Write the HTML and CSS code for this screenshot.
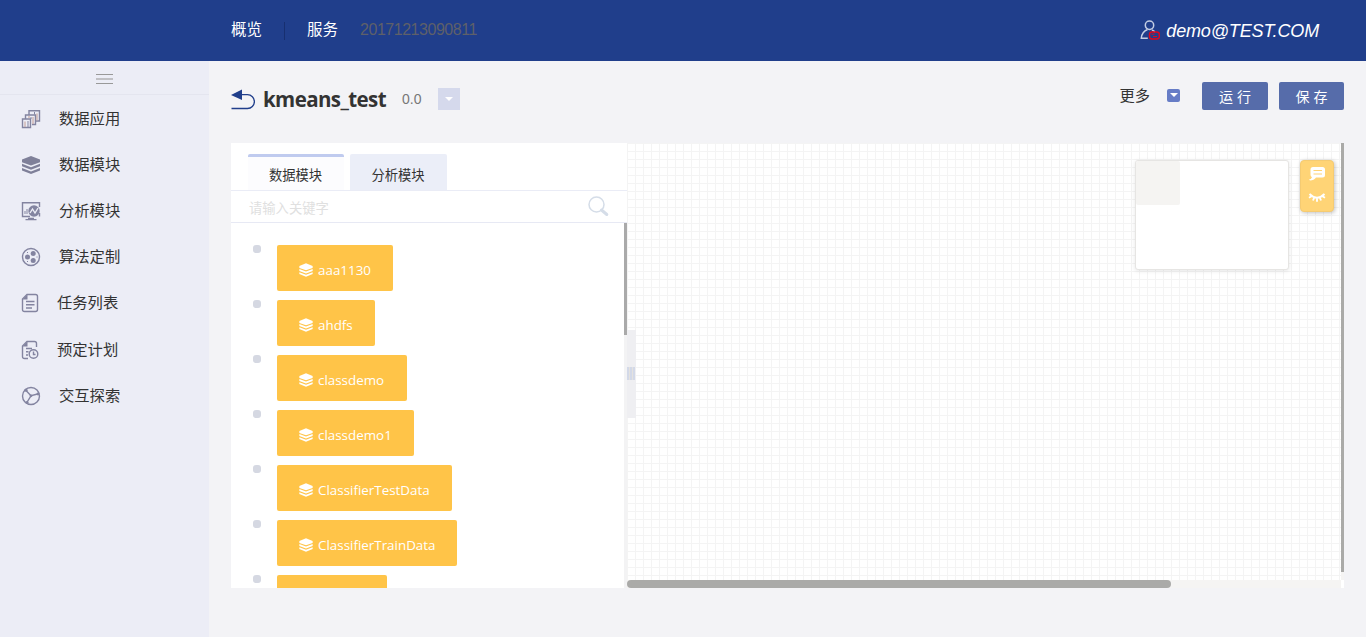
FILE: index.html
```
<!DOCTYPE html>
<html lang="zh-CN">
<head>
<meta charset="utf-8">
<title>kmeans_test</title>
<link rel="stylesheet" href="styles.css">
</head>
<body>
<svg class="defs" width="0" height="0">
  <symbol id="layers" viewBox="0 0 20 19"><path d="M10 0 19.500 3.800V6.500L10 10 0.500 6.500V3.800z"/><path d="M0.500 8.200 10 11.800 19.500 8.200V10.800L10 14.500 0.500 10.800z"/><path d="M0.500 12.700 10 16.300 19.500 12.700V15.300L10 19 0.500 15.300z"/></symbol>
</svg>
<header class="topbar">
  <nav class="topnav"><a>概览</a><i class="sep"></i><a>服务</a><span class="stamp">20171213090811</span></nav>
  <div class="user">
    <svg width="20" height="21" viewBox="0 0 20 21" fill="none"><circle cx="9.500" cy="5.200" r="4.200" stroke="#c3cde4" stroke-width="1.500"/><path d="M7.500 9.500C3.500 11 1.700 14 1.300 18.200h6.500M12 9.800l3 2" stroke="#c3cde4" stroke-width="1.500"/><rect x="9.500" y="12" width="9.800" height="7" rx="2.500" stroke="#e0061c" stroke-width="1.400"/><path d="M11.500 14.200h3M13 16.500h4" stroke="#e0061c"/></svg>
    <em>demo@TEST.COM</em>
  </div>
</header>
<div class="body">
  <aside class="sidebar">
    <div class="toggle"><span class="burger"></span></div>
    <ul class="menu">
      <li><svg viewBox="0 0 20 20"><path d="M8 6V1.800h10.500V12H15M4.500 10V6h10v9.500H11M1.500 10h8v8.500h-8z"/><path class="warm" d="M4 12.500v5.500M12 8v7M16 4.500v7M8 7v2"/><path class="thin" d="M7 12v6M10 8v2M13.500 3v2.500"/></svg><span>数据应用</span></li>
      <li><svg class="solid"><use href="#layers"/></svg><span>数据模块</span></li>
      <li><svg viewBox="0 0 20 20"><path d="M9 15.500H1.500V1.700h17V6M18.500 12v3.500"/><path class="thin" d="M4 10v3M6 8v5"/><circle class="fill" cx="13" cy="10" r="5.700"/><path class="light" d="M9 12l2.500-4 2.500 4 3-5"/><path d="M4.500 18.600h11M7 17.500h6"/></svg><span>分析模块</span></li>
      <li><svg viewBox="0 0 20 20"><circle cx="10" cy="10" r="8.500"/><circle class="fill" cx="6.500" cy="10" r="2.500"/><circle class="fill" cx="12.200" cy="6.500" r="2.500"/><circle class="fill" cx="12.200" cy="13.500" r="2.500"/><path class="thin" d="M6 5.500h1M6 14.500h1M15.500 10h1"/></svg><span>算法定制</span></li>
      <li class="narrow"><svg viewBox="0 0 20 20"><path d="M6 1.500h8.500q2 0 2 2v13q0 2-2 2H3.500q-2 0-2-2V6z"/><path class="fill" d="M1.500 6.500H6.500V1.500z"/><path d="M5 8.500h8.500M5 11.800h8.500M5 15h6"/></svg><span>任务列表</span></li>
      <li class="narrow"><svg viewBox="0 0 20 20"><path d="M7 18.500H3.500q-2 0-2-2V6L6 1.500h7.500q2 0 2 2V7M5 8.500h6M5 11.800h2.500M5 15h2"/><path class="fill" d="M1.500 6.500H6.500V1.500z"/><circle cx="12.500" cy="14" r="4.300"/><path d="M12.500 11.500V14.500h2"/></svg><span>预定计划</span></li>
      <li><svg viewBox="0 0 20 20"><circle cx="10" cy="10" r="8.500"/><path d="M4 3.500 10 9.800l8.500-2.300M10 9.800 5.500 17"/><circle class="fill" cx="5" cy="4.200" r="1.600"/><circle class="fill" cx="17" cy="8" r="1.400"/><circle class="fill" cx="10" cy="9.800" r="1.400"/><circle class="fill" cx="6" cy="16.500" r="1.600"/></svg><span>交互探索</span></li>
    </ul>
  </aside>
  <main class="main">
    <div class="titlebar">
      <svg class="back" width="24" height="21" viewBox="0 0 24 21"><path d="M0 6 11 0.500V11z" fill="#203e8b"/><path d="M10 5.700h6.500a6.800 6.800 0 0 1 0 13.800H0.500" fill="none" stroke="#203e8b" stroke-width="1.300"/></svg>
      <h1>kmeans_test</h1><span class="ver">0.0</span>
      <span class="drop"></span>
      <div class="actions"><span class="more">更多</span><span class="moredrop"></span><button>运 行</button><button class="save">保 存</button></div>
    </div>
    <div class="workspace">
      <section class="panel">
        <div class="tabs"><div class="tab active">数据模块</div><div class="tab">分析模块</div></div>
        <div class="search"><span>请输入关键字</span><svg width="21" height="22" viewBox="0 0 21 22" fill="none" stroke="#d5dde8"><circle cx="8.500" cy="8.500" r="7.500" stroke-width="1.500"/><path d="M13.500 14l5.300 4.500" stroke-width="3" stroke-linecap="round"/></svg></div>
        <div class="listwrap">
          <ul class="list">
            <li><i></i><div class="card w1"><svg><use href="#layers"/></svg>aaa1130</div></li>
            <li><i></i><div class="card w2"><svg><use href="#layers"/></svg>ahdfs</div></li>
            <li><i></i><div class="card w3"><svg><use href="#layers"/></svg>classdemo</div></li>
            <li><i></i><div class="card w4"><svg><use href="#layers"/></svg>classdemo1</div></li>
            <li><i></i><div class="card w5"><svg><use href="#layers"/></svg>ClassifierTestData</div></li>
            <li><i></i><div class="card w6"><svg><use href="#layers"/></svg>ClassifierTrainData</div></li>
            <li><i></i><div class="card w7"></div></li>
          </ul>
          <div class="track"><div class="thumb"></div></div>
        </div>
      </section>
      <section class="canvas">
        <div class="grid"></div>
        <div class="vtrack"><div class="vthumb"></div></div>
        <div class="htrack"><div class="hthumb"></div></div>
        <div class="handle"><span></span></div>
        <div class="minimap"><div class="view"></div></div>
        <div class="tools">
          <svg width="18" height="16" viewBox="0 0 18 16"><path fill="#fff" d="M5 1h9.500q2.500 0 2.500 2.500v5.500Q17 11.500 14.500 11.500H8q-2 3-6 3L1 13.500q2 0 3-2.300Q2.500 10.500 2.500 9v-5.500Q2.500 1 5 1z"/><path d="M5.500 4.500h8.500M5.500 8h8.500" stroke="#ffd476" stroke-width="1.200"/></svg>
          <svg width="18" height="12" viewBox="0 0 18 12" fill="none" stroke="#fff" stroke-width="1.900"><path d="M1.500 2Q9 9.500 16.500 2M1 5.700l2.500-1.500M5 8.500l1-2.500M9 9.800V6M13 8.500l-1-2.500M17 5.700l-2.500-1.500"/></svg>
        </div>
      </section>
    </div>
  </main>
</div>
</body>
</html>
```

FILE: styles.css
```
* { box-sizing: border-box; }
body { margin: 0; height: 637px; overflow: hidden; background: #f3f3f6; color: #333; font-family: "Liberation Sans", "Noto Sans CJK SC", sans-serif; }
ul { list-style: none; margin: 0; padding: 0; }
svg { flex: none; }
.defs { position: absolute; }
.topbar { height: 61px; background: #203e8b; display: flex; justify-content: space-between; align-items: center; padding: 0 47px 0 231px; color: #fff; }
.topnav { display: flex; align-items: center; font-size: 15.500px; line-height: 24px; padding-bottom: 2px; }
.sep { width: 1px; height: 18px; background: #172f70; margin: 2px 22px 0; }
.topnav a + .stamp { color: #5e6069; font-size: 16px; letter-spacing: -.47px; margin-left: 22px; }
.user { display: flex; align-items: center; gap: 6px; font-size: 18px; letter-spacing: -.15px; }
.user em { padding-top: 2px; }
.body { display: flex; height: 576px; }
.sidebar { width: 209px; background: #ecedf6; }
.toggle { height: 34px; border-bottom: 1px solid #e4e5ef; display: flex; justify-content: center; padding-top: 13px; }
.burger { width: 17px; height: 10px; background: linear-gradient(#999 1px, transparent 1px 4px, #c0c0c4 4px 6px, transparent 6px 9px, #999 9px); }
.menu li { display: flex; align-items: center; height: 46px; padding-left: 21px; gap: 18px; font-size: 15.300px; }
.menu li.narrow { gap: 16px; }
.menu li.narrow + .narrow { margin-top: 1px; }
.menu span { padding-bottom: 2px; }
.menu svg { width: 20px; height: 20px; margin-top: 2px; fill: none; stroke: #8384a0; stroke-width: 1.400; }
.menu svg.solid { height: 18px; fill: #7f8099; stroke: none; }
.menu .fill { fill: #8384a0; stroke: none; }
.menu .thin { stroke-width: 1; }
.menu .warm { stroke: #c9a9a4; stroke-width: 1.200; }
.menu .light { stroke: #ecedf6; }
.main { flex: 1; padding: 0 22px; }
.titlebar { height: 82px; display: flex; align-items: center; padding-bottom: 6px; }
.back { margin-right: 8px; }
h1 { margin: 0; width: 124px; white-space: nowrap; font: bold 20.500px/30px "Open Sans", "Noto Sans", sans-serif; letter-spacing: -.6px; }
.ver { font-size: 14px; color: #777; margin-left: 15px; width: 36px; }
.drop { width: 22px; height: 22px; background: #d5d9ec; display: grid; place-items: center; }
.drop::before, .moredrop::before { content: ""; border: 4px solid transparent; border-top: 4px solid #fff; border-bottom: 0; }
.actions { margin-left: auto; display: flex; align-items: center; padding-bottom: 6px; }
.more { font-size: 15.300px; padding-bottom: 4px; }
.moredrop { width: 13px; height: 13px; margin: 0 22px 2px 17px; background: #667cc6; border-radius: 2px; display: grid; place-items: center; }
button { width: 66px; height: 28px; border: 0; padding: 0; border-radius: 2px; background: #566caa; color: #fff; font: 14px "Liberation Sans", "Noto Sans CJK SC", sans-serif; }
button.save { width: 65px; margin-left: 11px; }
.workspace { display: flex; height: 445px; }
.panel { width: 396px; background: #fff; display: flex; flex-direction: column; }
.tabs { height: 48px; padding: 11px 0 0 17px; display: flex; gap: 6px; border-bottom: 1px solid #eaecf6; }
.tab { width: 97px; height: 36px; padding: 4px 1px 0 0; background: #ebeef8; border-radius: 2px 2px 0 0; font-size: 13.300px; display: flex; align-items: center; justify-content: center; }
.tab.active { width: 96px; background: #fcfcfe; border-top: 3px solid #c0cbef; padding-top: 1px; }
.search { height: 32px; border-bottom: 1px solid #e7e9f4; padding: 0 18px; display: flex; justify-content: space-between; align-items: center; color: #e0e0e0; font-size: 13.300px; }
.search span { padding-top: 1px; }
.listwrap { flex: 1; min-height: 0; display: flex; justify-content: space-between; overflow: hidden; }
.list { padding: 22px 0 0 22px; }
.list li { display: flex; gap: 16px; height: 46px; margin-bottom: 9px; }
.list i { width: 8px; height: 8px; border-radius: 3px; background: #d5d8e2; }
.card { height: 46px; background: #ffc448; border-radius: 2px; color: #fff; padding: 4px 0 0 22px; display: flex; align-items: center; gap: 5px; font: 13.400px "Open Sans", "Noto Sans", sans-serif; white-space: nowrap; }
.card svg { width: 14px; height: 14px; fill: #fff; margin-top: -1px; }
.w1 { width: 116px; } .w2 { width: 98px; } .w3 { width: 130px; } .w4 { width: 137px; } .w5 { width: 175px; } .w6 { width: 180px; } .w7 { width: 110px; }
.track { width: 3px; background: #f3f3f4; }
.thumb { height: 112px; background: #aaa; }
.canvas { position: relative; width: 717px; display: grid; grid-template: 437px 8px / 714px 3px; background: #fff; }
.grid { background: linear-gradient(#f4f4f4 1px, transparent 1px) 0 0 / 8px 8px, linear-gradient(90deg, #f4f4f4 1px, #fff 1px) 0 0 / 8px 8px; }
.vtrack { background: #f5f4f3; }
.vthumb { height: 429px; background: #aaaaa8; }
.htrack { background: #f5f4f3; }
.hthumb { width: 544px; height: 8px; border-radius: 4px; background: #aaaaa8; }
.handle { position: absolute; left: 0; top: 187px; width: 9px; height: 88px; background: #efeff2; display: flex; align-items: center; }
.handle span { width: 8px; height: 13px; margin-bottom: 1px; background: repeating-linear-gradient(90deg, #d3d9e8 0 2px, #e4e2df 2px 3px); }
.minimap { position: absolute; left: 508px; top: 17px; width: 154px; height: 110px; background: #fff; border: 1px solid #e6e5e3; border-radius: 3px; box-shadow: 0 1px 4px rgba(0,0,0,.1); }
.view { width: 44px; height: 44px; background: #f5f4f2; border-radius: 2px; }
.tools { position: absolute; left: 673px; top: 17px; width: 34px; height: 52px; background: #ffd476; border: 1px solid #f5cb72; border-radius: 4px; box-shadow: 1px 1px 4px rgba(0,0,0,.25); display: flex; flex-direction: column; align-items: center; gap: 10px; padding-top: 5px; }
```
